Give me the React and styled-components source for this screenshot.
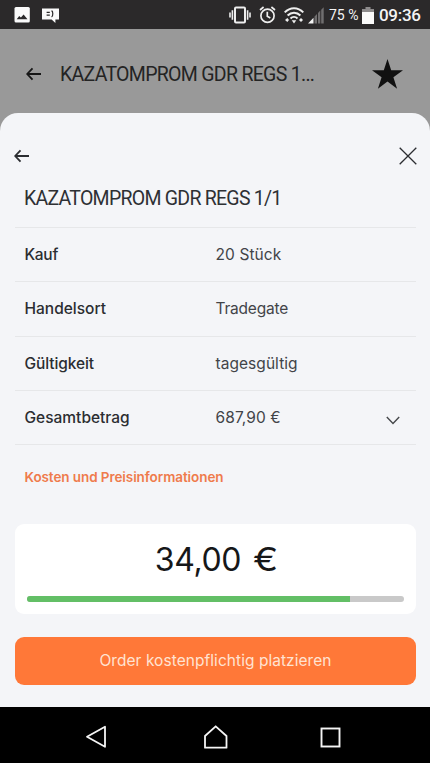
import React from 'react';
import styled, { createGlobalStyle } from 'styled-components';

const GlobalStyle = createGlobalStyle`
  * { box-sizing: border-box; }
  body { margin: 0; background: #000; }
`;

const Screen = styled.div`
  width: 430px;
  height: 763px;
  display: flex;
  flex-direction: column;
  overflow: hidden;
  background: #999999;
  font-family: Inter, "Liberation Sans", sans-serif;
  color: #2b2d31;
`;

const StatusBar = styled.header`
  height: 29px;
  flex: none;
  display: flex;
  align-items: center;
  padding: 1px 9px 0 12px;
  background: #2b292a;
  color: #f4f4f4;
  font-family: Roboto, sans-serif;
  svg { display: block; flex: none; }
`;

const Notifications = styled.div`
  display: flex;
  align-items: center;
  gap: 10px;
  flex: 1;
`;

const SystemIcons = styled.div`
  display: flex;
  align-items: center;
`;

const BatteryLevel = styled.span`
  width: 31px;
  margin-left: 5px;
  font-size: 14px;
  line-height: 20px;
  white-space: nowrap;
`;

const Clock = styled.span`
  width: 42px;
  margin-left: 5px;
  font-size: 17px;
  font-weight: 500;
  line-height: 20px;
  letter-spacing: -0.3px;
  white-space: nowrap;
`;

const AppHeader = styled.div`
  height: 84px;
  flex: none;
  display: flex;
  align-items: center;
  padding: 6px 27px 0 26px;
  color: #171717;
  svg { display: block; }
`;

const Title = styled.h1`
  margin: 0;
  font-family: Roboto, sans-serif;
  font-size: 19.5px;
  font-weight: 400;
  line-height: 26px;
  white-space: nowrap;
  letter-spacing: ${(p) => p.$tracking};
  color: ${(p) => p.$color || '#2e3034'};
`;

const HeaderTitle = styled.div`
  flex: 1;
  margin-left: 18px;
  padding-top: 1px;
`;

const Sheet = styled.main`
  height: 594px;
  flex: none;
  display: flex;
  flex-direction: column;
  padding: 0 14px 0 15px;
  border-radius: 18px 18px 0 0;
  background: #f4f5f8;
`;

const SheetActions = styled.div`
  display: flex;
  align-items: center;
  justify-content: space-between;
  height: 22px;
  margin: 32px -1px 0 -1px;
  svg { display: block; }
`;

const IconButton = styled.button`
  display: flex;
  padding: 0;
  border: 0;
  background: none;
  color: inherit;
`;

const SheetTitle = styled.div`
  height: 61px;
  padding: 19px 0 0 9px;
  border-bottom: 1px solid #e6e7e9;
`;

const DetailRow = styled.div`
  height: 54.25px;
  display: grid;
  grid-template-columns: 191px 1fr auto;
  align-items: center;
  padding: 1px 16px 0 9.5px;
  border-bottom: 1px solid #e6e7e9;
  font-size: 15.5px;
  line-height: 20px;
  svg { display: block; margin-top: 5px; }
`;

const Label = styled.span`
  font-weight: 500;
  white-space: nowrap;
  letter-spacing: ${(p) => p.$tracking || '0'};
`;

const Value = styled.span`
  color: #424448;
  white-space: nowrap;
  letter-spacing: ${(p) => p.$tracking || '0'};
`;

const CostLink = styled.a`
  height: 20px;
  margin: 22px 0 0 9.5px;
  font-size: 13.5px;
  font-weight: 600;
  line-height: 20px;
  letter-spacing: -0.08px;
  white-space: nowrap;
  color: #ef7b4c;
`;

const PriceCard = styled.section`
  height: 90px;
  margin-top: 37px;
  padding: 15px 12px 0;
  border-radius: 9px;
  background: #fff;
`;

const Price = styled.div`
  display: flex;
  align-items: baseline;
  justify-content: center;
  gap: 12px;
  height: 42px;
  line-height: 42px;
  font-size: 32px;
  white-space: nowrap;
  letter-spacing: -0.35px;
  color: #161719;
`;

const Currency = styled.span`
  display: inline-block;
  width: 23px;
  transform: scaleX(1.18);
  transform-origin: left center;
`;

const Track = styled.div`
  height: 6px;
  margin-top: 15px;
  border-radius: 3px;
  overflow: hidden;
  background: #c9c9c9;
`;

const Progress = styled.div`
  width: 85.8%;
  height: 100%;
  background: #63bf66;
`;

const OrderButton = styled.button`
  height: 48px;
  margin-top: 23px;
  padding: 0 0 1px;
  border: 0;
  border-radius: 9px;
  background: #ff7838;
  color: #ffe3d2;
  font-family: inherit;
  font-size: 15.5px;
  line-height: 20px;
  letter-spacing: 0.05px;
  white-space: nowrap;
`;

const NavBar = styled.nav`
  flex: 1;
  display: grid;
  grid-template-columns: 118px 117px auto;
  align-items: center;
  padding: 4px 0 0 85px;
  background: #000;
  svg { display: block; }
`;

const ArrowLeft = () => (
  <svg width="16" height="14" viewBox="0 0 16 14" fill="none" stroke="currentColor" strokeWidth="1.8">
    <path d="M15 7H1.5M6.5 1.3L1.2 7l5.3 5.7" />
  </svg>
);

const CloseIcon = () => (
  <svg width="18" height="18" viewBox="0 0 18 18" fill="none" stroke="currentColor" strokeWidth="1.3">
    <path d="M.7.7l16.6 16.6M17.3.7L.7 17.3" />
  </svg>
);

const StarIcon = () => (
  <svg width="31" height="30" viewBox="0 0 31 30">
    <path fill="#111" d="M15.5 0l3.7 11.2H31l-9.6 7 3.7 11.5-9.6-7.1-9.6 7.1 3.7-11.5-9.6-7h11.8z" />
  </svg>
);

const ChevronDown = () => (
  <svg width="14" height="9" viewBox="0 0 14 9" fill="none" stroke="#45474a" strokeWidth="1.4">
    <path d="M.8 1L7 7.4 13.2 1" />
  </svg>
);

const PictureIcon = () => (
  <svg width="20" height="16" viewBox="0 0 20 16">
    <rect x="2.5" width="15.3" height="15.5" rx="1.5" fill="#fafafa" />
    <path fill="#2b292a" d="M4.7 12.3l2.5-3.2 1.7 1.5 2.7-3.2 3.9 4.9z" />
  </svg>
);

const MessageIcon = () => (
  <svg width="17" height="15" viewBox="0 0 17 15">
    <path fill="#fafafa" d="M0 .5h17v11h-3.6V15L9.6 11.5H0z" />
    <g fill="none" stroke="#2b292a" strokeWidth="1.2">
      <path d="M4.6 4.4h3.2M4.6 7.2h3.2M9.6 2.6c1.6.8 1.6 5.6 0 6.5" />
    </g>
  </svg>
);

const VibrateIcon = () => (
  <svg width="22" height="18" viewBox="0 0 22 18" fill="none" stroke="#eee">
    <rect x="6" y="1.5" width="10" height="15" rx="1" strokeWidth="2" />
    <path strokeWidth="1.6" d="M3.4 4.3v9.4M1 6.5v5M18.6 4.3v9.4M21 6.5v5" />
  </svg>
);

const AlarmIcon = () => (
  <svg width="17" height="18" viewBox="0 0 17 18" fill="none" stroke="#eee" strokeWidth="1.7">
    <circle cx="8.5" cy="9.8" r="6.6" />
    <path d="M8.3 5.8v4.5l3 1.6M1 4l3.6-3M16 4l-3.6-3" />
  </svg>
);

const WifiIcon = () => (
  <svg width="20" height="17" viewBox="0 0 20 17" fill="none" stroke="#eee" strokeWidth="2">
    <path d="M.7 5.4C6-.3 14-.3 19.3 5.4M3.6 8.5c3.7-3.8 9.1-3.8 12.8 0M6.5 11.4c2-1.9 5-1.9 7 0" />
    <path fill="#eee" stroke="none" d="M7.7 13.3h4.6L10 16.4zM1 13l2.3-2v4zM5 13l-1.7-2v4zM17 11l2 2-2 2-2-2z" />
  </svg>
);

const SignalIcon = () => (
  <svg width="16" height="17" viewBox="0 0 16 17">
    <path fill="#f4f4f4" d="M0 16.5l5.5-5.8v5.8z" />
    <path fill="#706e6f" d="M6.5 9.5L9 7v9.5H6.5zM10 6l2.3-2.4v12.9H10zM13.2 2.7L15.7.3v16.2h-2.5z" />
  </svg>
);

const BatteryIcon = () => (
  <svg width="12" height="17" viewBox="0 0 12 17">
    <path fill="#8d8b8c" d="M3.5 0h5v2H12v4H0V2h3.5z" />
    <path fill="#fafafa" d="M0 5h12v12H0z" />
  </svg>
);

const BackNavIcon = () => (
  <svg width="22" height="24" viewBox="0 0 22 24" fill="none" stroke="#f5f5f5" strokeWidth="1.8" strokeLinejoin="round">
    <path d="M20 1.8v20L2 11.8z" />
  </svg>
);

const HomeNavIcon = () => (
  <svg width="26" height="25" viewBox="0 0 26 25" fill="none" stroke="#f5f5f5" strokeWidth="1.8" strokeLinejoin="round">
    <path d="M2 22.7V11L12.7 1.3 23.5 11v11.7z" />
  </svg>
);

const RecentNavIcon = () => (
  <svg width="21" height="21" viewBox="0 0 21 21" fill="none" stroke="#f5f5f5" strokeWidth="1.9">
    <rect x="1.5" y="1.5" width="18" height="18" />
  </svg>
);

const Gap = styled.span`
  width: ${(p) => p.$w}px;
  flex: none;
`;

const details = [
  { label: 'Kauf', value: '20 Stück', labelTracking: '-0.3px', valueTracking: '0.1px' },
  { label: 'Handelsort', value: 'Tradegate', valueTracking: '-0.2px' },
  { label: 'Gültigkeit', value: 'tagesgültig', labelTracking: '-0.1px', valueTracking: '0.05px' },
  { label: 'Gesamtbetrag', value: '687,90 €', valueTracking: '0.1px', expandable: true },
];

export default function App() {
  return (
    <Screen>
      <GlobalStyle />
      <StatusBar>
        <Notifications>
          <PictureIcon />
          <MessageIcon />
        </Notifications>
        <SystemIcons>
          <VibrateIcon />
          <Gap $w={8} />
          <AlarmIcon />
          <Gap $w={8} />
          <WifiIcon />
          <Gap $w={4} />
          <SignalIcon />
          <BatteryLevel>75 %</BatteryLevel>
          <Gap $w={2} />
          <BatteryIcon />
          <Clock>09:36</Clock>
        </SystemIcons>
      </StatusBar>
      <AppHeader>
        <IconButton aria-label="Zurück"><ArrowLeft /></IconButton>
        <HeaderTitle>
          <Title as="div" $tracking="-0.7px" $color="#242424">KAZATOMPROM GDR REGS 1...</Title>
        </HeaderTitle>
        <StarIcon />
      </AppHeader>
      <Sheet>
        <SheetActions>
          <IconButton aria-label="Zurück"><ArrowLeft /></IconButton>
          <IconButton aria-label="Schließen"><CloseIcon /></IconButton>
        </SheetActions>
        <SheetTitle>
          <Title $tracking="-0.74px">KAZATOMPROM GDR REGS 1/1</Title>
        </SheetTitle>
        {details.map((d) => (
          <DetailRow key={d.label}>
            <Label $tracking={d.labelTracking}>{d.label}</Label>
            <Value $tracking={d.valueTracking}>{d.value}</Value>
            {d.expandable && <ChevronDown />}
          </DetailRow>
        ))}
        <CostLink>Kosten und Preisinformationen</CostLink>
        <PriceCard>
          <Price>
            <span>34,00</span>
            <Currency>€</Currency>
          </Price>
          <Track><Progress /></Track>
        </PriceCard>
        <OrderButton>Order kostenpflichtig platzieren</OrderButton>
      </Sheet>
      <NavBar>
        <BackNavIcon />
        <HomeNavIcon />
        <RecentNavIcon />
      </NavBar>
    </Screen>
  );
}
